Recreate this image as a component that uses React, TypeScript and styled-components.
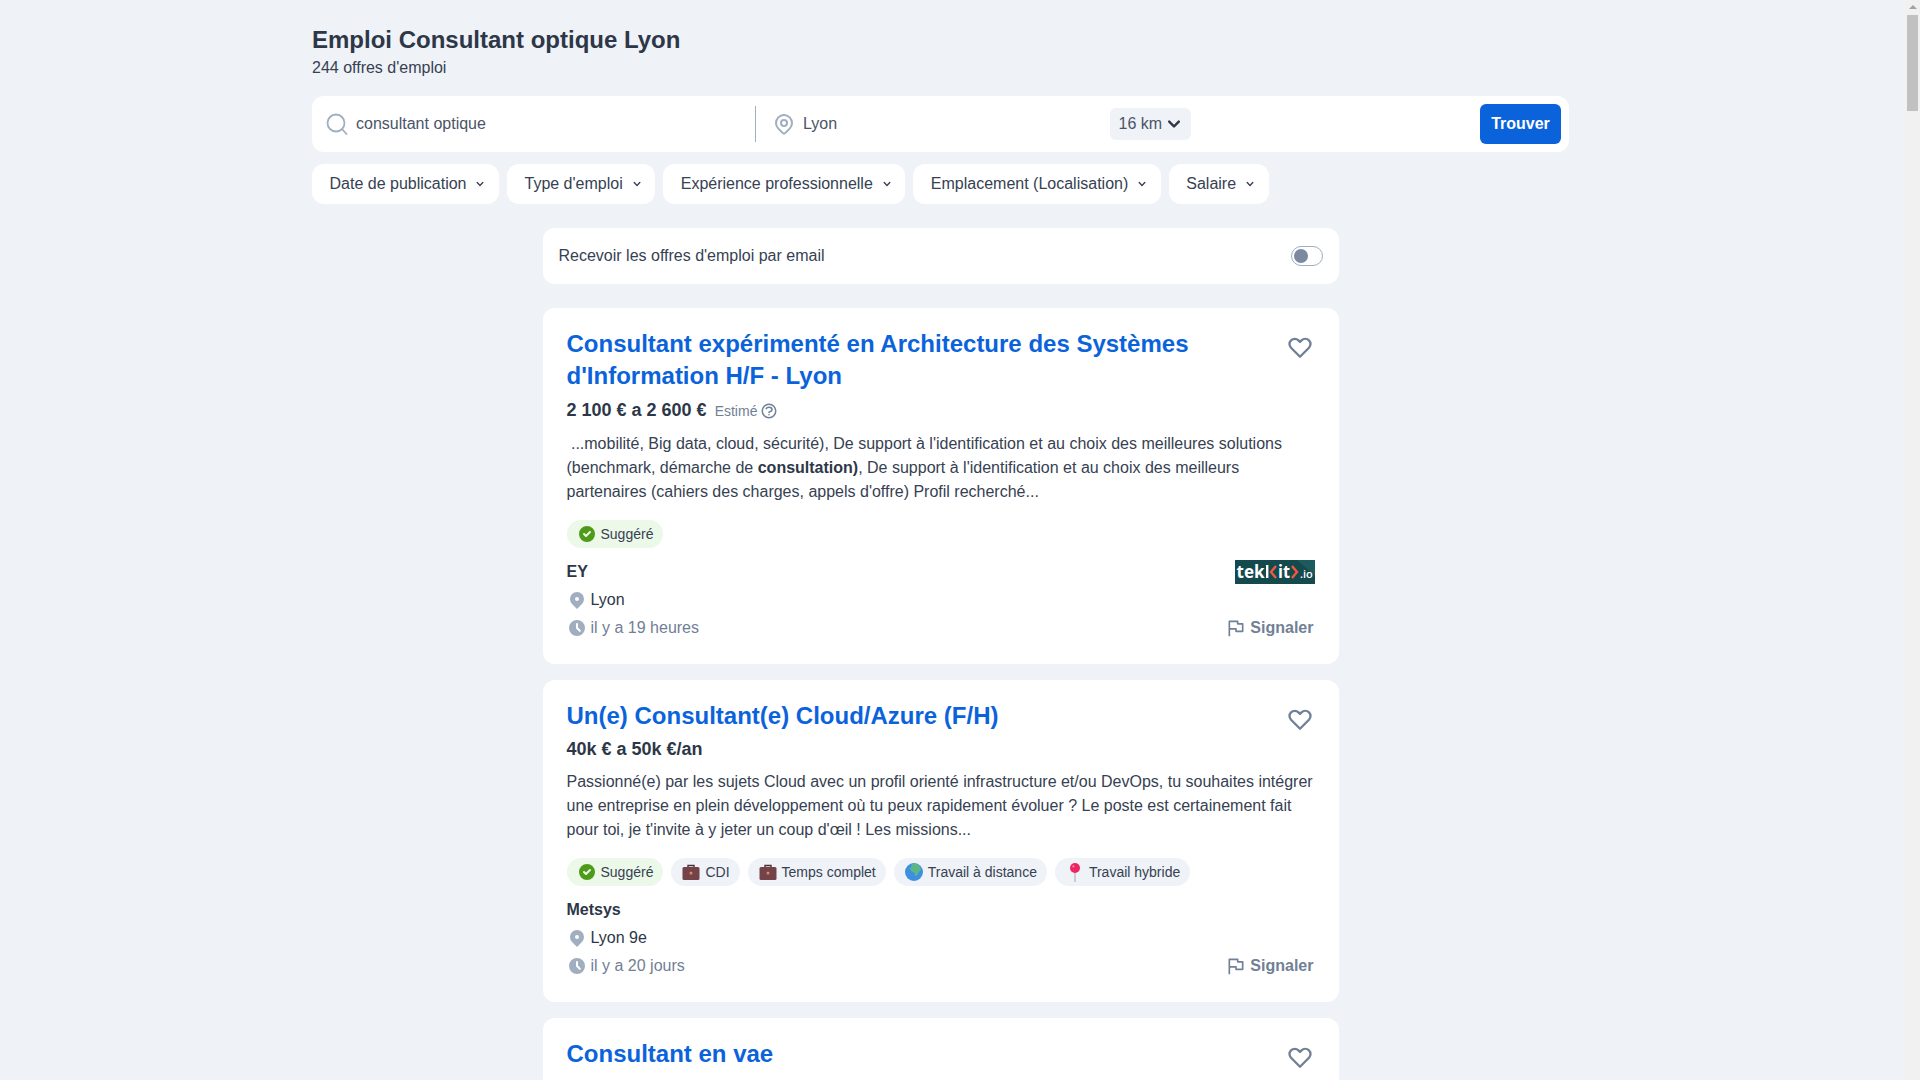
import React from 'react';
import styled, { createGlobalStyle } from 'styled-components';
import {
  HiOutlineLocationMarker,
  HiLocationMarker,
  HiClock,
  HiCheckCircle,
  HiChevronDown,
  HiOutlineQuestionMarkCircle,
  HiOutlineHeart,
} from 'react-icons/hi';

const GlobalStyle = createGlobalStyle`
  html, body {
    margin: 0;
    height: 100%;
    overflow: hidden;
    background: #eff2f7;
  }
  body {
    font-family: "Liberation Sans", Arial, sans-serif;
    color: #364152;
    font-size: 16px;
  }
`;

const Shell = styled.div`
  display: flex;
  height: 100vh;
  overflow: hidden;
`;

const Page = styled.main`
  flex: 1;
  min-width: 0;
  padding: 24px 0 0 312px;
`;

const Rail = styled.div`
  width: 15px;
  flex: none;
  background: #f1f1f1;
  display: flex;
  flex-direction: column;
  align-items: center;
`;

const RailArrow = styled.div`
  margin-top: 5px;
  width: 0;
  height: 0;
  border-left: 4px solid transparent;
  border-right: 4px solid transparent;
  border-bottom: 4px solid #a3a3a3;
`;

const RailThumb = styled.div`
  margin-top: 6px;
  width: 11px;
  height: 96px;
  background: #c1c1c1;
`;

const Header = styled.header`
  width: 1257px;
`;

const Title = styled.h1`
  margin: 0;
  font-size: 24px;
  line-height: 32px;
  font-weight: 700;
  color: #2d3748;
`;

const Count = styled.div`
  line-height: 24px;
`;

const SearchBar = styled.form`
  margin-top: 16px;
  height: 56px;
  background: #fff;
  border-radius: 12px;
  display: flex;
  align-items: center;
  padding: 0 8px 0 13px;
`;

const Field = styled.div<{ $width: number }>`
  width: ${(p) => p.$width}px;
  display: flex;
  align-items: center;
  flex: none;
`;

const Divider = styled.div`
  width: 1px;
  height: 36px;
  background: #a0aec0;
  flex: none;
`;

const SearchGlyph = styled.svg`
  color: #a0aec0;
  width: 24px;
  height: 24px;
  flex: none;
`;

const PinIcon = styled(HiOutlineLocationMarker)`
  color: #a0aec0;
  width: 24px;
  height: 24px;
  flex: none;
  margin-left: 16px;
`;

const FieldText = styled.span<{ $gap: number; $width?: number }>`
  margin-left: ${(p) => p.$gap}px;
  ${(p) => (p.$width ? `width: ${p.$width}px;` : '')}
  color: #4a5568;
`;

const Distance = styled.div`
  display: flex;
  align-items: center;
  height: 32px;
  padding: 0 5px 0 8.5px;
  background: #eff2f7;
  border-radius: 6px;
  color: #4a5568;

  svg {
    width: 24px;
    height: 24px;
    color: #2d3748;
  }
`;

const FindButton = styled.button`
  margin-left: auto;
  width: 81px;
  height: 40px;
  border: 0;
  border-radius: 6px;
  background: #0b63dc;
  color: #fff;
  font: 700 16px "Liberation Sans", Arial, sans-serif;
`;

const Filters = styled.div`
  margin-top: 12px;
  display: flex;
  gap: 8px;
`;

const Filter = styled.button`
  height: 40px;
  padding: 0 11.5px 0 17.5px;
  display: flex;
  align-items: center;
  gap: 7px;
  background: #fff;
  border: 0;
  border-radius: 12px;
  color: #364152;
  font: 16px "Liberation Sans", Arial, sans-serif;

  svg {
    width: 14px;
    height: 14px;
  }
`;

const Column = styled.div`
  width: 796px;
  margin: 24px 0 0 231px;
  display: flex;
  flex-direction: column;
  gap: 16px;
`;

const AlertRow = styled.div`
  height: 56px;
  margin-bottom: 8px;
  background: #fff;
  border-radius: 12px;
  padding: 0 16px 0 15.5px;
  display: flex;
  align-items: center;
  justify-content: space-between;
`;

const Toggle = styled.div`
  width: 32px;
  height: 20px;
  box-sizing: border-box;
  border: 1px solid #a0aec0;
  border-radius: 10px;
  padding: 2px;
  display: flex;
  align-items: center;
`;

const Knob = styled.div`
  width: 14px;
  height: 14px;
  border-radius: 50%;
  background: #7c8aa0;
`;

const Card = styled.article<{ $clipped?: boolean }>`
  background: #fff;
  border-radius: 12px;
  padding: 20px 24px 24px 23.5px;
  ${(p) => (p.$clipped ? 'min-height: 240px;' : '')}
`;

const CardTop = styled.div`
  display: flex;
  justify-content: space-between;
  align-items: flex-start;
`;

const CardTitle = styled.a`
  width: 660px;
  font-size: 24px;
  line-height: 32px;
  font-weight: 700;
  color: #0b63dc;
`;

const HeartIcon = styled(HiOutlineHeart)`
  width: 28px;
  height: 28px;
  color: #718096;
  margin: 5px 1px -9px 0;
  flex: none;
`;

const SalaryRow = styled.div`
  margin-top: 4px;
  min-height: 26px;
  display: flex;
  align-items: center;
  gap: 8px;
`;

const Salary = styled.strong`
  font-size: 18px;
  line-height: 26px;
  color: #2d3748;
`;

const Estimate = styled.span`
  display: flex;
  align-items: center;
  gap: 3px;
  height: 28px;
  box-sizing: border-box;
  padding-top: 2px;
  color: #718096;
  font-size: 14px;

  svg {
    width: 18px;
    height: 18px;
  }
`;

const Description = styled.p`
  margin: 8px 0 0;
  line-height: 24px;

  b {
    font-weight: 700;
    color: #2d3748;
  }
`;

const Tags = styled.div`
  margin-top: 16px;
  display: flex;
  gap: 8px;
`;

const Tag = styled.span<{ $green?: boolean }>`
  height: 28px;
  padding: 0 10px;
  display: flex;
  align-items: center;
  gap: 4px;
  border-radius: 14px;
  font-size: 14px;
  background: ${(p) => (p.$green ? '#ecf8e8' : '#eff2f7')};

  svg {
    width: 20px;
    height: 20px;
    flex: none;
  }
`;

const Company = styled.div`
  margin-top: 12px;
  display: flex;
  justify-content: space-between;
  align-items: center;
  height: 24px;
  font-weight: 700;
  color: #2d3748;
`;

const MetaRow = styled.div<{ $muted?: boolean }>`
  margin-top: 4px;
  height: 24px;
  display: flex;
  align-items: center;
  justify-content: space-between;
  color: ${(p) => (p.$muted ? '#718096' : '#2d3748')};
`;

const MetaText = styled.span`
  display: flex;
  align-items: center;
  gap: 4px;

  svg {
    width: 20px;
    height: 20px;
    color: #a0aec0;
  }
`;

const Report = styled.span`
  display: flex;
  align-items: center;
  gap: 4px;
  font-weight: 700;
  color: #718096;
  margin-right: 1.5px;

  svg {
    width: 20px;
    height: 20px;
  }
`;

const CheckIcon = styled(HiCheckCircle)`
  color: #4e9a1b;
`;

const SearchIcon = () => (
  <SearchGlyph viewBox="0 0 24 24" fill="none" stroke="currentColor" strokeWidth="1.8" strokeLinecap="round">
    <circle cx="11" cy="11" r="8.500" />
    <path d="M17.500 17.500l4 4.500" />
  </SearchGlyph>
);

const FlagIcon = () => (
  <svg viewBox="0 0 24 24" fill="none" stroke="currentColor" strokeWidth="2" strokeLinejoin="round">
    <path d="M4 22V4h10v3h6v9h-8v-3H4" />
  </svg>
);

const Briefcase = () => (
  <svg viewBox="0 0 20 20">
    <path d="M7 5V3.500h6V5" fill="none" stroke="#4a2f33" strokeWidth="1.400" />
    <rect x="1.500" y="5" width="17" height="13" rx="1.500" fill="#734349" />
    <rect x="8.700" y="9.800" width="2.600" height="2.600" fill="#e08a55" />
  </svg>
);

const Globe = () => (
  <svg viewBox="0 0 20 20">
    <circle cx="10" cy="10" r="9" fill="#3d8fe0" />
    <path
      d="M8 1.500c3 -.6 6 .4 8 2.500l1.200 3.500 -2.700 3 -1.500 3 -2 .2 -.5 -3 -3 -1.500 -2 -2.700 1.500 -1.200z"
      fill="#5db58a"
    />
  </svg>
);

const Pushpin = () => (
  <svg viewBox="0 0 20 20">
    <rect x="9.300" y="9" width="1.400" height="11" fill="#b8bcc4" />
    <circle cx="10" cy="6" r="5" fill="#f0245f" />
    <circle cx="8.400" cy="4.400" r="1.100" fill="#f98aa9" />
  </svg>
);

const Logo = () => (
  <svg width="80" height="24" viewBox="0 0 80 24">
    <rect width="80" height="24" fill="#14494d" />
    <path d="M62 0h18v16z" fill="#1c5a5c" />
    <text
      x="1.500"
      y="18"
      fontFamily="Open Sans"
      fontWeight="700"
      fontSize="18"
      fill="#fff"
      textLength="28"
      lengthAdjust="spacingAndGlyphs"
    >
      tek
    </text>
    <rect x="31" y="5" width="2.400" height="13" fill="#fff" />
    <path d="M41 6l-5 6 5 6" fill="none" stroke="#ef5a3c" strokeWidth="2.400" />
    <text
      x="43"
      y="18"
      fontFamily="Open Sans"
      fontWeight="700"
      fontSize="18"
      fill="#fff"
      textLength="12"
      lengthAdjust="spacingAndGlyphs"
    >
      it
    </text>
    <path d="M57 6l5 6 -5 6" fill="none" stroke="#ef5a3c" strokeWidth="2.400" />
    <text x="65" y="18" fontFamily="Open Sans" fontWeight="600" fontSize="11" fill="#fff">
      .io
    </text>
  </svg>
);

const filters = [
  'Date de publication',
  "Type d'emploi",
  'Expérience professionnelle',
  'Emplacement (Localisation)',
  'Salaire',
];

interface JobProps {
  title: React.ReactNode;
  salary: string;
  estimated?: boolean;
  children: React.ReactNode;
  tags: React.ReactNode;
  company: string;
  logo?: boolean;
  city: string;
  age: string;
}

const Job = ({ title, salary, estimated, children, tags, company, logo, city, age }: JobProps) => (
  <Card>
    <CardTop>
      <CardTitle>{title}</CardTitle>
      <HeartIcon />
    </CardTop>
    <SalaryRow>
      <Salary>{salary}</Salary>
      {estimated && (
        <Estimate>
          Estimé <HiOutlineQuestionMarkCircle />
        </Estimate>
      )}
    </SalaryRow>
    <Description>{children}</Description>
    <Tags>{tags}</Tags>
    <Company>
      {company}
      {logo && <Logo />}
    </Company>
    <MetaRow>
      <MetaText>
        <HiLocationMarker />
        {city}
      </MetaText>
    </MetaRow>
    <MetaRow $muted>
      <MetaText>
        <HiClock />
        {age}
      </MetaText>
      <Report>
        <FlagIcon />
        Signaler
      </Report>
    </MetaRow>
  </Card>
);

const Suggested = () => (
  <Tag $green>
    <CheckIcon />
    Suggéré
  </Tag>
);

export default function App() {
  return (
    <Shell>
      <GlobalStyle />
      <Page>
        <Header>
          <Title>Emploi Consultant optique Lyon</Title>
          <Count>244 offres d'emploi</Count>
          <SearchBar>
            <Field $width={430}>
              <SearchIcon />
              <FieldText $gap={7}>consultant optique</FieldText>
            </Field>
            <Divider />
            <PinIcon />
            <FieldText $gap={7} $width={307}>
              Lyon
            </FieldText>
            <Distance>
              16 km
              <HiChevronDown />
            </Distance>
            <FindButton type="button">Trouver</FindButton>
          </SearchBar>
          <Filters>
            {filters.map((f) => (
              <Filter key={f} type="button">
                {f}
                <HiChevronDown />
              </Filter>
            ))}
          </Filters>
        </Header>
        <Column>
          <AlertRow>
            Recevoir les offres d'emploi par email
            <Toggle>
              <Knob />
            </Toggle>
          </AlertRow>
          <Job
            title="Consultant expérimenté en Architecture des Systèmes d'Information H/F - Lyon"
            salary="2 100 € a 2 600 €"
            estimated
            tags={<Suggested />}
            company="EY"
            logo
            city="Lyon"
            age="il y a 19 heures"
          >
            &nbsp;...mobilité, Big data, cloud, sécurité), De support à l'identification et au choix des
            meilleures solutions (benchmark, démarche de <b>consultation)</b>, De support à
            l'identification et au choix des meilleurs partenaires (cahiers des charges, appels d'offre)
            Profil recherché...
          </Job>
          <Job
            title="Un(e) Consultant(e) Cloud/Azure (F/H)"
            salary="40k € a 50k €/an"
            tags={
              <>
                <Suggested />
                <Tag>
                  <Briefcase />
                  CDI
                </Tag>
                <Tag>
                  <Briefcase />
                  Temps complet
                </Tag>
                <Tag>
                  <Globe />
                  Travail à distance
                </Tag>
                <Tag>
                  <Pushpin />
                  Travail hybride
                </Tag>
              </>
            }
            company="Metsys"
            city="Lyon 9e"
            age="il y a 20 jours"
          >
            Passionné(e) par les sujets Cloud avec un profil orienté infrastructure et/ou DevOps, tu
            souhaites intégrer une entreprise en plein développement où tu peux rapidement évoluer ? Le
            poste est certainement fait pour toi, je t'invite à y jeter un coup d'œil ! Les missions...
          </Job>
          <Card $clipped>
            <CardTop>
              <CardTitle>Consultant en vae</CardTitle>
              <HeartIcon />
            </CardTop>
          </Card>
        </Column>
      </Page>
      <Rail>
        <RailArrow />
        <RailThumb />
      </Rail>
    </Shell>
  );
}
